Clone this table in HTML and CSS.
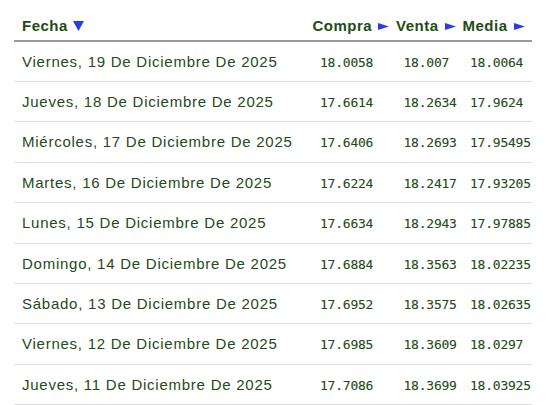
FILE: index.html
```html
<!DOCTYPE html>
<html lang="es">
<head>
<meta charset="utf-8">
<title>Tipo de cambio</title>
<link rel="stylesheet" href="styles.css">
</head>
<body>
<div class="wrap">
  <div class="rates">
    <div class="row head">
      <div class="cell date">Fecha<svg class="down" width="11" height="10" viewBox="0 0 11 10"><polygon points="0,0 11,0 5.5,10"/></svg></div>
      <div class="cell">Compra<svg class="right" width="11" height="7" viewBox="0 0 11 7"><polygon points="0,0 11,3.5 0,7"/></svg></div>
      <div class="cell">Venta<svg class="right" width="11" height="7" viewBox="0 0 11 7"><polygon points="0,0 11,3.5 0,7"/></svg></div>
      <div class="cell">Media<svg class="right" width="11" height="7" viewBox="0 0 11 7"><polygon points="0,0 11,3.5 0,7"/></svg></div>
    </div>
    <div class="row"><div class="cell date">Viernes, 19 De Diciembre De 2025</div><div class="cell num">18.0058</div><div class="cell num">18.007</div><div class="cell num">18.0064</div></div>
    <div class="row"><div class="cell date">Jueves, 18 De Diciembre De 2025</div><div class="cell num">17.6614</div><div class="cell num">18.2634</div><div class="cell num">17.9624</div></div>
    <div class="row"><div class="cell date">Miércoles, 17 De Diciembre De 2025</div><div class="cell num">17.6406</div><div class="cell num">18.2693</div><div class="cell num">17.95495</div></div>
    <div class="row"><div class="cell date">Martes, 16 De Diciembre De 2025</div><div class="cell num">17.6224</div><div class="cell num">18.2417</div><div class="cell num">17.93205</div></div>
    <div class="row"><div class="cell date">Lunes, 15 De Diciembre De 2025</div><div class="cell num">17.6634</div><div class="cell num">18.2943</div><div class="cell num">17.97885</div></div>
    <div class="row"><div class="cell date">Domingo, 14 De Diciembre De 2025</div><div class="cell num">17.6884</div><div class="cell num">18.3563</div><div class="cell num">18.02235</div></div>
    <div class="row"><div class="cell date">Sábado, 13 De Diciembre De 2025</div><div class="cell num">17.6952</div><div class="cell num">18.3575</div><div class="cell num">18.02635</div></div>
    <div class="row"><div class="cell date">Viernes, 12 De Diciembre De 2025</div><div class="cell num">17.6985</div><div class="cell num">18.3609</div><div class="cell num">18.0297</div></div>
    <div class="row"><div class="cell date">Jueves, 11 De Diciembre De 2025</div><div class="cell num">17.7086</div><div class="cell num">18.3699</div><div class="cell num">18.03925</div></div>
  </div>
</div>
</body>
</html>
```
FILE: styles.css
```css
html, body {
  margin: 0;
  padding: 0;
  background: #ffffff;
}
.wrap {
  padding-left: 14px;
}
.rates {
  width: 518px;
  color: #224c16;
  font-family: "Liberation Sans", Arial, sans-serif;
}
.row {
  display: grid;
  grid-template-columns: 298.5px 83.5px 66.5px 69.5px;
  align-items: baseline;
  height: 40.4px;
  box-sizing: border-box;
  padding-top: 11px;
  border-bottom: 1px solid #dedede;
  font-size: 15px;
  line-height: 17px;
  letter-spacing: 0.75px;
}
.row.head {
  height: 41.6px;
  padding-top: 17px;
  border-bottom: 2px solid #9a9a9a;
  font-weight: bold;
  letter-spacing: 0.5px;
}
.cell {
  white-space: nowrap;
}
.cell.date {
  padding-left: 8px;
}
.num {
  padding-left: 7.5px;
  font-family: "DejaVu Sans Mono", "Liberation Mono", monospace;
  font-size: 13px;
  letter-spacing: -0.23px;
  -webkit-text-stroke: 0.1px #224c16;
}
svg {
  fill: #2a3ced;
}
.down {
  margin-left: 5.5px;
  vertical-align: 0;
}
.right {
  margin-left: 6px;
  vertical-align: 1.5px;
}
```
